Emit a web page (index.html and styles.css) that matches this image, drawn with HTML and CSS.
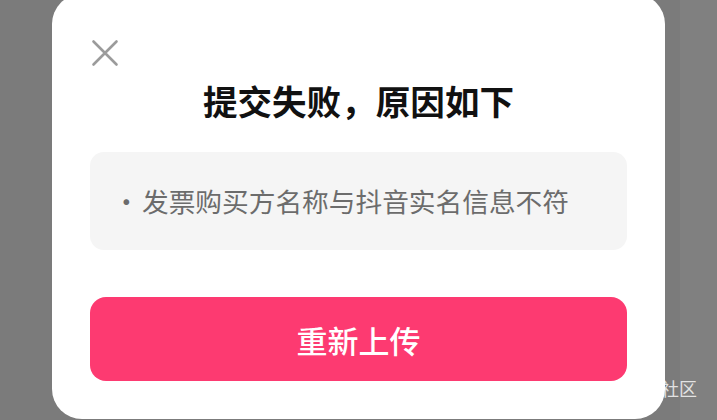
FILE: index.html
```html
<!DOCTYPE html>
<html lang="zh-CN">
<head>
    <meta charset="UTF-8">
    <meta name="viewport" content="width=device-width, initial-scale=1.0">
    <title>提交失败</title>
    <link rel="stylesheet" href="styles.css">
</head>
<body>
    <!-- Watermark behind the dialog -->
    <div class="watermark">社区</div>

    <div class="dialog">
        <button class="close" aria-label="关闭">
            <svg width="28" height="28" viewBox="0 0 28 28">
                <path d="M2.5 2.5 L25.5 25.5 M25.5 2.5 L2.5 25.5" stroke="#9b9b9b" stroke-width="2.6" stroke-linecap="round" fill="none"/>
            </svg>
        </button>

        <h1 class="title">提交失败，原因如下</h1>

        <div class="reason-box">
            <p class="reason"><span class="dot">·</span>发票购买方名称与抖音实名信息不符</p>
        </div>

        <button class="retry">重新上传</button>
    </div>
</body>
</html>
```

FILE: styles.css
```css
body {
    margin: 0;
    height: 420px;
    overflow: hidden;
    background: linear-gradient(to right, #7b7b7b 680px, #808080 680px);
    font-family: "Noto Sans CJK SC", "Noto Sans", sans-serif;
    position: relative;
}

.watermark {
    position: absolute;
    left: 661px;
    top: 379px;
    font-size: 18px;
    line-height: 1;
    color: rgba(255, 255, 255, 0.78);
}

.dialog {
    position: relative;
    z-index: 1;
    width: 613px;
    height: 425px;
    margin: -6px 0 0 52px;
    padding: 86px 38px 0;
    box-sizing: border-box;
    background-color: #ffffff;
    border-radius: 30px;
}

.close {
    position: absolute;
    left: 39px;
    top: 45px;
    width: 28px;
    height: 28px;
    padding: 0;
    border: none;
    background: none;
    cursor: pointer;
}

.close svg {
    display: block;
}

.title {
    margin: 0;
    font-size: 34.6px;
    line-height: 40px;
    font-weight: 700;
    text-align: center;
    color: #111111;
}

.reason-box {
    margin-top: 32px;
    height: 98px;
    display: flex;
    align-items: center;
    padding: 0 20px 0 23px;
    background-color: #f5f5f5;
    border-radius: 14px;
}

.reason {
    margin: 0;
    font-size: 26.7px;
    line-height: 1;
    color: #6c6c6c;
    white-space: nowrap;
}

.dot {
    display: inline-block;
    width: 29px;
}

.retry {
    display: block;
    width: 100%;
    height: 84px;
    margin-top: 47px;
    border: none;
    border-radius: 16px;
    background-color: #fd3a71;
    color: #ffffff;
    font-family: inherit;
    font-size: 31px;
    font-weight: 500;
    cursor: pointer;
}
```
